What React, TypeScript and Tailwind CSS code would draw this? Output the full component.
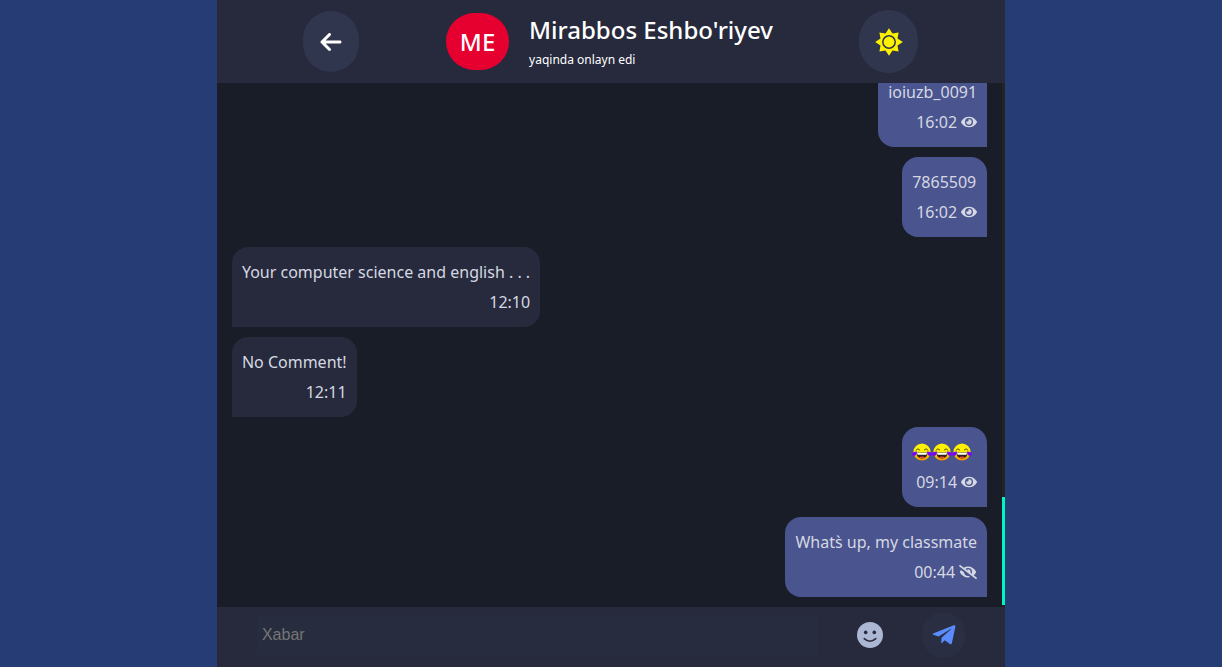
import { FaArrowLeft } from "react-icons/fa6";
import { FaEye, FaEyeSlash, FaTelegramPlane } from "react-icons/fa";

type Message = {
  id: number;
  text?: string;
  joy?: number;
  time: string;
  mine: boolean;
  seen?: boolean;
};

const messages: Message[] = [
  { id: 1, text: "ioiuzb_0091", time: "16:02", mine: true, seen: true },
  { id: 2, text: "7865509", time: "16:02", mine: true, seen: true },
  { id: 3, text: "Your computer science and english . . .", time: "12:10", mine: false },
  { id: 4, text: "No Comment!", time: "12:11", mine: false },
  { id: 5, joy: 3, time: "09:14", mine: true, seen: true },
  { id: 6, text: "Whats\u0300 up, my classmate", time: "00:44", mine: true, seen: false },
];

function JoyFace() {
  return (
    <svg viewBox="0 0 20 18" className="h-[18px] w-5" role="img" aria-label="Tears of joy">
      <defs>
        <linearGradient id="joy" x1="0" y1="0" x2="0" y2="1">
          <stop offset="0.55" stopColor="#fff200" />
          <stop offset="1" stopColor="#f08a00" />
        </linearGradient>
      </defs>
      <circle cx="10" cy="9" r="8.6" fill="url(#joy)" />
      <path d="M3.8 7.4Q5.8 4.4 8 7.2M12 7.2Q14.2 4.4 16.2 7.4" fill="none" stroke="#5e4a00" strokeWidth="1" />
      <path d="M4.4 9.6H15.6Q15.6 15.4 10 15.4T4.4 9.6Z" fill="#30201c" />
      <path d="M5 9.7H15L14.4 11.8H5.6Z" fill="#fff" />
      <path d="M6.6 14.2Q10 12.6 13.4 14.2Q10 16.2 6.6 14.2Z" fill="#f04a32" />
      <path d="M5 8.6C2.6 8.6 0 9.4 0.2 11.6C0.5 13.4 3.8 13.2 4.4 11.2Z" fill="#7a00ff" />
      <path d="M15 8.6C17.4 8.6 20 9.4 19.8 11.6C19.5 13.4 16.2 13.2 15.6 11.2Z" fill="#7a00ff" />
    </svg>
  );
}

function SunIcon() {
  return (
    <svg viewBox="-14 -14 28 28" className="size-7" aria-hidden="true">
      <path
        d="M0 -13.8L3.5 -8.5L9.6 -9.6L8.5 -3.5L13.8 0L8.5 3.5L9.6 9.6L3.5 8.5L0 13.8L-3.5 8.5L-9.6 9.6L-8.5 3.5L-13.8 0L-8.5 -3.5L-9.6 -9.6L-3.5 -8.5Z"
        fill="#fff200"
      />
      <circle r="6.2" fill="none" stroke="#2f364d" strokeWidth="1.5" />
    </svg>
  );
}

function SmileIcon() {
  return (
    <svg viewBox="0 0 26 26" className="size-[26px]" aria-hidden="true">
      <circle cx="13" cy="13" r="13" fill="#abb7d3" />
      <circle cx="8.7" cy="10.4" r="1.8" fill="#262a3c" />
      <circle cx="17.3" cy="10.4" r="1.8" fill="#262a3c" />
      <path d="M7.2 16.6Q13 21.8 18.8 16.6" fill="none" stroke="#262a3c" strokeWidth="1.5" strokeLinecap="round" />
    </svg>
  );
}

function Bubble({ message }: { message: Message }) {
  return (
    <li
      className={
        message.mine
          ? "shrink-0 self-end rounded-2xl rounded-br-none bg-[#4a548e] p-2.5"
          : "shrink-0 self-start rounded-2xl rounded-bl-none bg-[#262a3c] p-2.5"
      }
    >
      <p className="flex h-[30px] items-center leading-[30px]">
        {message.text}
        {Array.from({ length: message.joy ?? 0 }, (_, i) => (
          <JoyFace key={i} />
        ))}
      </p>
      <div className="flex h-[30px] items-center justify-end gap-1 pl-1">
        <time>{message.time}</time>
        {message.mine &&
          (message.seen ? (
            <FaEye className="size-4" aria-label="Seen" />
          ) : (
            <FaEyeSlash className="size-[18px]" aria-label="Not seen" />
          ))}
      </div>
    </li>
  );
}

export default function App() {
  return (
    <div className="h-screen bg-[#253c74] font-['Noto_Sans',sans-serif] text-base">
      <main className="mx-auto flex h-full w-[64.5%] flex-col bg-[#191d28]">
        <header className="flex h-[83px] shrink-0 items-center justify-evenly bg-[#262a3c] text-white">
          <button
            type="button"
            aria-label="Back"
            className="flex h-[61px] w-14 items-center justify-center rounded-full bg-[#2f364d]"
          >
            <FaArrowLeft className="size-6" />
          </button>
          <div className="flex items-center gap-5">
            <div className="flex h-[57px] w-[63px] items-center justify-center rounded-[30px] bg-[#e60030] text-2xl font-medium">
              ME
            </div>
            <div>
              <h1 className="text-2xl font-medium leading-9">Mirabbos Eshbo'riyev</h1>
              <p className="text-xs leading-6">yaqinda onlayn edi</p>
            </div>
          </div>
          <button
            type="button"
            aria-label="Light theme"
            className="flex h-[63px] w-[59px] items-center justify-center rounded-full bg-[#2f364d]"
          >
            <SunIcon />
          </button>
        </header>

        <section className="flex min-h-0 flex-1">
          <ul className="flex min-w-0 flex-1 flex-col justify-end gap-2.5 overflow-hidden px-[15px] pb-2.5 text-[#d5d8e2]">
            {messages.map((message) => (
              <Bubble key={message.id} message={message} />
            ))}
          </ul>
          <div className="flex w-[3px] flex-col justify-end bg-[#242424] pb-0.5">
            <div className="h-[108px] bg-[#00f5c4]" />
          </div>
        </section>

        <form className="flex h-[60px] shrink-0 items-center gap-[39px] bg-[#262a3c] px-10 pb-1">
          <input
            type="text"
            aria-label="Xabar"
            placeholder="Xabar"
            className="h-10 min-w-0 flex-1 bg-[#282c3f] px-[5px] font-['Liberation_Sans',sans-serif] text-white outline-none placeholder:text-[#757575]"
          />
          <button type="button" aria-label="Emoji">
            <SmileIcon />
          </button>
          <button
            type="button"
            aria-label="Send"
            className="flex h-[46px] w-[43px] items-center justify-center rounded-full bg-[#2a2e42] text-[#5b8cff]"
          >
            <FaTelegramPlane className="size-[26px]" />
          </button>
        </form>
      </main>
    </div>
  );
}
